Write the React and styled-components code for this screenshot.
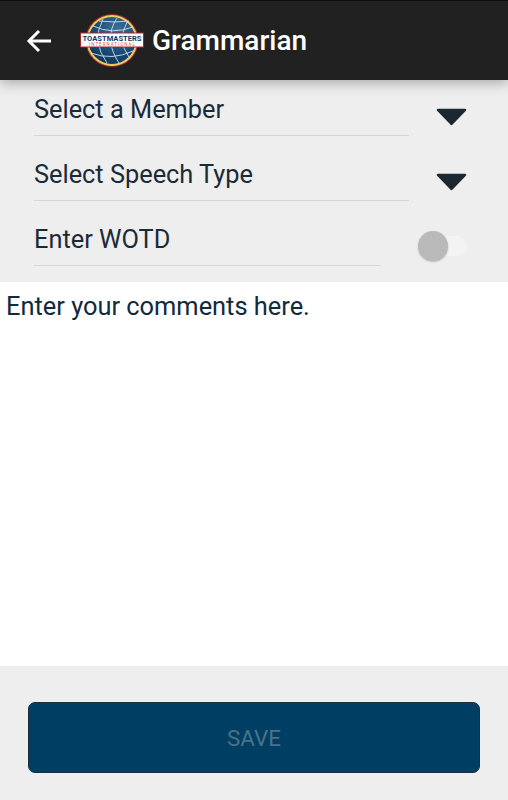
import React from 'react';
import styled, { createGlobalStyle } from 'styled-components';

const GlobalStyle = createGlobalStyle`
  html, body {
    margin: 0;
    padding: 0;
    background: #eeeeee;
  }
  * {
    box-sizing: border-box;
  }
`;

const Screen = styled.div`
  width: 508px;
  height: 800px;
  display: flex;
  flex-direction: column;
  font-family: Roboto, sans-serif;
  background: #eeeeee;
  overflow: hidden;
`;

const Toolbar = styled.header`
  position: relative;
  z-index: 1;
  flex: 0 0 80px;
  display: flex;
  align-items: center;
  padding-left: 26px;
  background: #212121;
  border-top: 1px solid #0c0c0c;
  box-shadow: 0 3px 12px rgba(0, 0, 0, 0.3);
`;

const BackButton = styled.div`
  width: 26px;
  height: 26px;
  margin-right: 27px;
  color: #ffffff;
`;

const Title = styled.h1`
  margin: 0 0 0 7px;
  font-size: 28px;
  font-weight: 500;
  color: #ffffff;
`;

const Form = styled.section`
  flex: 0 0 202px;
  padding-left: 34px;
`;

const Row = styled.div`
  height: ${(p) => p.$height}px;
  display: flex;
  align-items: flex-end;
`;

const Field = styled.div`
  width: ${(p) => p.$width}px;
  height: 100%;
  display: flex;
  align-items: flex-end;
  padding-bottom: 11px;
  border-bottom: 1px solid #d4d9d7;
  font-size: 25.35px;
  color: #1a2b38;
`;

const Caret = styled.svg`
  width: 31px;
  height: 18px;
  margin-left: 27px;
  margin-bottom: ${(p) => p.$bottom}px;
`;

const Toggle = styled.div`
  position: relative;
  width: 49px;
  height: 20px;
  margin-left: 37px;
  margin-bottom: 10px;
  border-radius: 10px;
  background: #f3f3f3;
`;

const Thumb = styled.div`
  position: absolute;
  top: -5px;
  left: 0;
  width: 30px;
  height: 30px;
  border-radius: 50%;
  background: #b9b9b9;
  box-shadow: 0 1px 2px rgba(0, 0, 0, 0.25);
`;

const Comments = styled.div`
  flex: 0 0 384px;
  padding: 8px 6px;
  background: #ffffff;
  font-size: 25.4px;
  line-height: 32px;
  color: #102a3c;
`;

const Footer = styled.footer`
  flex: 1;
  display: flex;
  align-items: center;
  padding: 8px 28px 0;
`;

const SaveButton = styled.button`
  width: 100%;
  height: 71px;
  padding: 2px 0 0;
  border: 1px solid #1c2f40;
  border-radius: 7px;
  background: #003e63;
  font-family: inherit;
  font-size: 22.4px;
  color: #4a7289;
`;

function Logo() {
  return (
    <svg width="66" height="56" viewBox="0 0 66 56">
      <defs>
        <radialGradient id="globe" cx="60%" cy="30%" r="80%">
          <stop offset="0%" stopColor="#3f7299" />
          <stop offset="55%" stopColor="#1a4f7a" />
          <stop offset="100%" stopColor="#0c3050" />
        </radialGradient>
      </defs>
      <circle cx="33" cy="27.5" r="26.5" fill="#a9242f" />
      <circle cx="33" cy="27.5" r="25.5" fill="#e8cf62" />
      <circle cx="33" cy="27.5" r="23.5" fill="url(#globe)" />
      <g fill="none" stroke="#cfe0ec" strokeWidth="0.9">
        <path d="M14 13 Q33 22 54 14" />
        <path d="M12 40 Q33 48 54 38" />
        <path d="M24 6 Q12 28 28 50" />
        <path d="M38 5 Q24 26 40 50" />
        <path d="M48 9 Q38 28 50 44" />
        <path d="M20 8 Q36 10 50 8" />
      </g>
      <rect x="1.5" y="20" width="63" height="14" fill="#ffffff" stroke="#a9242f" strokeWidth="1" />
      <text x="33" y="27.5" textAnchor="middle" fontFamily="Roboto, sans-serif" fontSize="7.5" fontWeight="700" fill="#123a63" textLength="59" lengthAdjust="spacingAndGlyphs">TOASTMASTERS</text>
      <text x="33" y="33" textAnchor="middle" fontFamily="Roboto, sans-serif" fontSize="4.5" fill="#c8606a" textLength="46" lengthAdjust="spacing">INTERNATIONAL</text>
    </svg>
  );
}

function DownCaret({ bottom }) {
  return (
    <Caret $bottom={bottom} viewBox="0 0 31 18">
      <path d="M2 2 H29 L15.5 16 Z" fill="#1c2831" stroke="#1c2831" strokeWidth="2.5" strokeLinejoin="round" />
    </Caret>
  );
}

export default function App() {
  return (
    <Screen>
      <GlobalStyle />
      <Toolbar>
        <BackButton>
          <svg width="26" height="26" viewBox="0 0 26 26" fill="none" stroke="currentColor" strokeWidth="3">
            <path d="M25 13 H3" />
            <path d="M13 3 L3 13 L13 23" />
          </svg>
        </BackButton>
        <Logo />
        <Title>Grammarian</Title>
      </Toolbar>
      <Form>
        <Row $height={56}>
          <Field $width={375}>Select a Member</Field>
          <DownCaret bottom={10} />
        </Row>
        <Row $height={65}>
          <Field $width={375}>Select Speech Type</Field>
          <DownCaret bottom={10} />
        </Row>
        <Row $height={65}>
          <Field $width={347}>Enter WOTD</Field>
          <Toggle>
            <Thumb />
          </Toggle>
        </Row>
      </Form>
      <Comments>Enter your comments here.</Comments>
      <Footer>
        <SaveButton disabled>SAVE</SaveButton>
      </Footer>
    </Screen>
  );
}
